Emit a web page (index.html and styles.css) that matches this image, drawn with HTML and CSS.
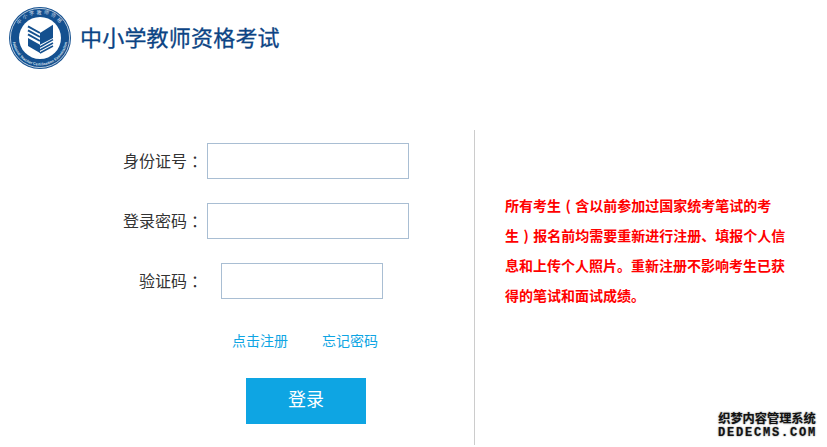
FILE: index.html
```html
<!DOCTYPE html>
<html lang="zh-CN">
<head>
    <meta charset="UTF-8">
    <title>中小学教师资格考试</title>
    <link rel="stylesheet" href="styles.css">
</head>
<body>
    <div class="header">
        <svg class="logo" width="64" height="64" viewBox="0 0 64 64">
            <defs>
                <path id="ringTop" d="M7.5 32 A24.5 24.5 0 0 1 56.5 32"/>
                <path id="ringBottom" d="M4.5 32 A27.5 27.5 0 0 0 59.5 32"/>
            </defs>
            <circle cx="32" cy="32" r="31" fill="#14508f"/>
            <circle cx="32" cy="32" r="29.6" fill="none" stroke="#fff" stroke-width="0.7"/>
            <circle cx="32" cy="32" r="21" fill="#fff"/>
            <text class="ring-cn"><textPath href="#ringTop" startOffset="50%" text-anchor="middle">中小学教师资格</textPath></text>
            <text class="ring-en"><textPath href="#ringBottom" startOffset="50%" text-anchor="middle">National Teacher Certification Examination</textPath></text>
            <!-- book -->
            <path fill="#14508f" d="M20 32 L32 38.700 V47 L20 40 Z"/>
            <path fill="#14508f" d="M32 27 L45 18.700 V32 L32 38.700 Z"/>
            <path fill="none" stroke="#14508f" stroke-width="2" d="M20 20.300 L32 27 M20 24.300 L32 31 M20 28.300 L32 35"/>
            <path fill="none" stroke="#14508f" stroke-width="1.500" d="M32 41 L45 33.700 M32 44 L45 37 M32 47 L45 40"/>
        </svg>
        <div class="site-title">中小学教师资格考试</div>
    </div>

    <div class="main">
        <form class="login-form">
            <div class="form-row">
                <label>身份证号<span class="colon">：</span></label>
                <input type="text" class="text-input">
            </div>
            <div class="form-row">
                <label>登录密码<span class="colon">：</span></label>
                <input type="password" class="text-input">
            </div>
            <div class="form-row">
                <label>验证码<span class="colon">：</span></label>
                <input type="text" class="text-input code-input">
            </div>
            <div class="links">
                <a href="#">点击注册</a>
                <a href="#">忘记密码</a>
            </div>
            <button type="button" class="login-btn">登录</button>
        </form>
        <div class="notice">
            <p>所有考生<span class="paren">(</span>含以前参加过国家统考笔试的考<br>
            生<span class="paren">)</span>报名前均需要重新进行注册、填报个人信<br>
            息和上传个人照片。重新注册不影响考生已获<br>
            得的笔试和面试成绩。</p>
        </div>
    </div>

    <div class="watermark">织梦内容管理系统<br><span>DEDECMS.COM</span></div>
</body>
</html>
```

FILE: styles.css
```css
body {
    margin: 0;
    background-color: #fff;
    font-family: "Liberation Sans", "Noto Sans CJK SC", sans-serif;
    color: #333;
    position: relative;
    height: 447px;
    overflow: hidden;
}

.header {
    display: flex;
    align-items: center;
    height: 76px;
    padding-left: 8px;
}

.logo {
    flex: none;
}

.ring-cn {
    font-size: 5px;
    letter-spacing: 2px;
    fill: #cfdcea;
}

.ring-en {
    font-size: 3.800px;
    font-weight: bold;
    fill: #dbe5f0;
}

.site-title {
    margin: 0 0 5px 8px;
    font-size: 22px;
    letter-spacing: 0.2px;
    color: #0c4484;
    -webkit-text-stroke: 0.3px #0c4484;
}

.main {
    display: flex;
    margin-top: 54px;
}

.login-form {
    width: 474px;
    height: 302px;
    border-right: 1px solid #ccc;
    padding-top: 13px;
    box-sizing: content-box;
}

.form-row {
    display: flex;
    align-items: center;
    height: 36px;
    margin-bottom: 24px;
}

.form-row label {
    width: 203px;
    margin: 0 4px 2px 0;
    text-align: right;
    font-size: 16px;
}

/* full-width colon sits in the middle of its box */
.colon {
    padding-left: 4px;
    margin-right: -4px;
}

.text-input {
    width: 202px;
    height: 36px;
    padding: 0;
    border: 1px solid #a9bed3;
    box-sizing: border-box;
    background-color: #fff;
}

.code-input {
    width: 162px;
    margin-left: 14px;
}

.links {
    display: flex;
    gap: 34px;
    padding-left: 232px;
    margin-top: 32px;
    line-height: 20px;
}

.links a {
    font-size: 14px;
    color: #0ea5e3;
    text-decoration: none;
}

.login-btn {
    display: block;
    width: 120px;
    height: 46px;
    margin: 27px 0 0 246px;
    padding-bottom: 8px;
    border: none;
    background-color: #0ea5e3;
    color: #fff;
    font-family: inherit;
    font-size: 18px;
    cursor: pointer;
}

.notice {
    width: 300px;
    margin-left: 30px;
    padding-top: 60px;
}

.notice p {
    margin: 0;
    font-family: "Noto Sans CJK SC", sans-serif;
    font-size: 14px;
    line-height: 30px;
    font-weight: bold;
    color: #f00;
}

.paren {
    padding: 0 4.500px;
}

.watermark {
    position: absolute;
    right: 11px;
    bottom: 7px;
    width: 98px;
    font-size: 12.200px;
    line-height: 13px;
    font-weight: bold;
    color: #111;
    text-shadow: 0 0 2px #999, 0 0 1px #999;
    text-align: center;
}

.watermark span {
    font-family: "Liberation Mono", monospace;
    font-size: 12px;
    letter-spacing: 1.800px;
}
```
